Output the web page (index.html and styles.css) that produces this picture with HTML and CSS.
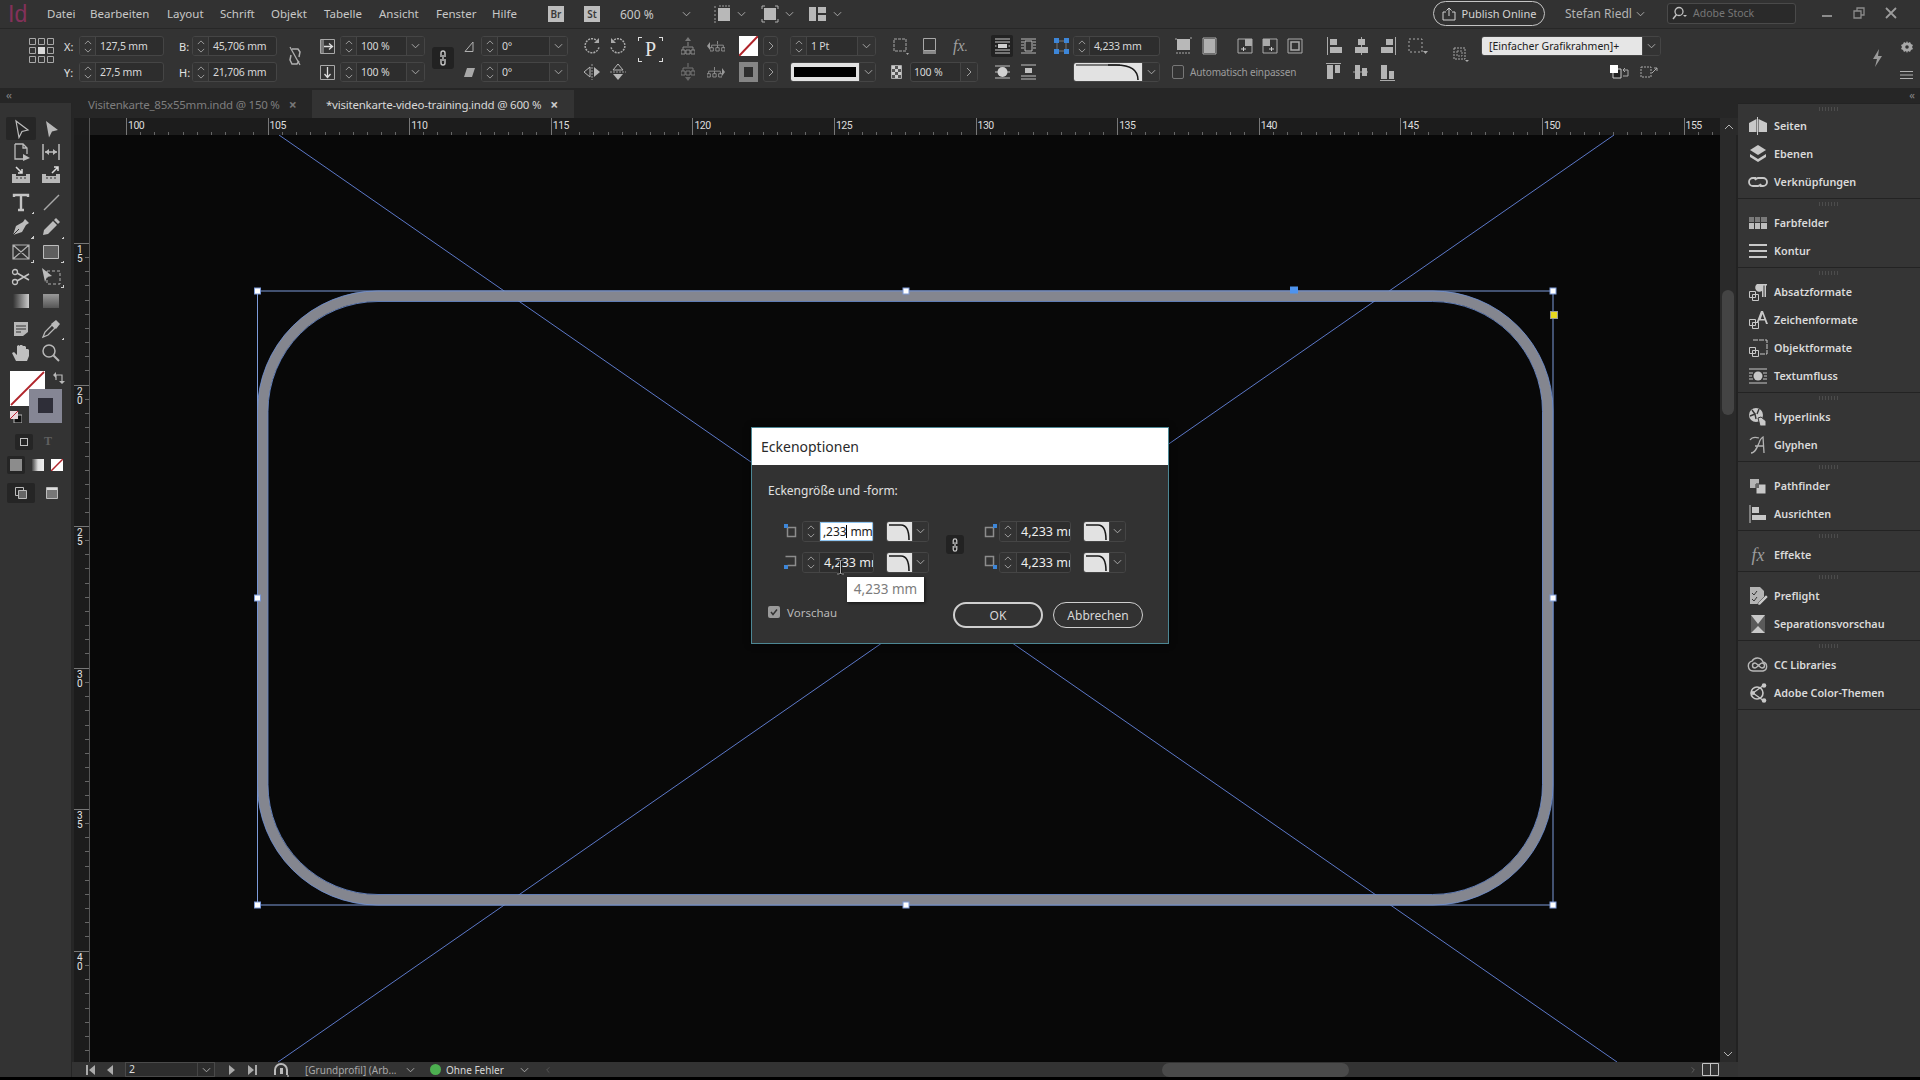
FILE: index.html
```html
<!DOCTYPE html>
<html lang="de">
<head>
<meta charset="utf-8">
<title>InDesign</title>
<link rel="stylesheet" href="styles.css">
</head>
<body>
<svg class="sprite" width="0" height="0">
  <symbol id="up" viewBox="0 0 10 6"><path d="M1 5l4-4 4 4" fill="none" stroke="#b4b4b4" stroke-width="1"/></symbol>
  <symbol id="dn" viewBox="0 0 10 6"><path d="M1 1l4 4 4-4" fill="none" stroke="#b4b4b4" stroke-width="1"/></symbol>
  <symbol id="rt" viewBox="0 0 6 10"><path d="M1 1l4 4-4 4" fill="none" stroke="#a0a0a0" stroke-width="1"/></symbol>
  <symbol id="corner" viewBox="0 0 26 20"><path d="M2 3H14Q22 3 22 18" fill="none" stroke="#1a1a1a" stroke-width="1.6"/></symbol>
  <symbol id="tri" viewBox="0 0 4 4"><path d="M4 0V4H0Z" fill="#c0c0c0"/></symbol>
  <symbol id="chain" viewBox="0 0 10 18"><path d="M3 8V4a2 2 0 0 1 4 0v4M3 10v4a2 2 0 0 0 4 0v-4M5 6v6" fill="none" stroke="#c8c8c8" stroke-width="1.4"/></symbol>
  <symbol id="hgrid" viewBox="0 0 18 12"><path d="M9 0v4M2 8V5h14v3M9 5v3" fill="none" stroke="#9a9a9a"/><path d="M0 8h4v4H0zM7 8h4v4H7zM14 8h4v4h-4z" fill="none" stroke="#9a9a9a"/></symbol>
</svg>

<div class="app">
  <header class="menubar">
    <span class="logo">Id</span>
    <nav class="menu">
      <span>Datei</span><span>Bearbeiten</span><span>Layout</span><span>Schrift</span><span>Objekt</span><span>Tabelle</span><span>Ansicht</span><span>Fenster</span><span>Hilfe</span>
    </nav>
    <span class="badge br">Br</span>
    <span class="badge st">St</span>
    <span class="zoomval">600 %</span>
    <svg class="ch zoomch"><use href="#dn"/></svg>
    <svg class="mi view1" width="18" height="18" viewBox="0 0 18 18"><path d="M5 3h12v13H5z" fill="#b8b8b8"/><path d="M1 2h3M1 6h3M1 10h3M1 14h3M1 17h3M6 1h11" stroke="#a0a0a0" stroke-dasharray="2 1" fill="none"/></svg>
    <svg class="ch vch"><use href="#dn"/></svg>
    <svg class="mi view2" width="18" height="18" viewBox="0 0 18 18"><path d="M3 3h12v12H3z" fill="#b8b8b8"/><path d="M1 4V1h3M14 1h3v3M17 14v3h-3M4 17H1v-3" stroke="#b0b0b0" fill="none"/></svg>
    <svg class="ch vch"><use href="#dn"/></svg>
    <svg class="mi view3" width="18" height="16" viewBox="0 0 18 16"><path d="M0 1h7v14H0zM9 1h8v6H9zM9 9h8v6H9z" fill="#b8b8b8"/></svg>
    <svg class="ch vch"><use href="#dn"/></svg>
    <button class="publish"><svg width="14" height="14" viewBox="0 0 14 14"><path d="M4 5H1v8h12V5h-3M7 9V1M4.500 3.500L7 1l2.500 2.500" fill="none" stroke="#d0d0d0"/></svg>Publish Online</button>
    <span class="user">Stefan Riedl</span>
    <svg class="ch userch"><use href="#dn"/></svg>
    <div class="search"><svg width="16" height="14" viewBox="0 0 16 14"><circle cx="7" cy="5.500" r="4" fill="none" stroke="#c0c0c0" stroke-width="1.300"/><path d="M4.500 8.500L1 13" stroke="#c0c0c0" stroke-width="1.500"/><path d="M11 9h4l-2 2z" fill="#c0c0c0"/></svg><span>Adobe Stock</span></div>
    <div class="winbtns">
      <svg width="12" height="12" viewBox="0 0 12 12"><path d="M1 8h10v2H1z" fill="#8c8c8c"/></svg>
      <svg width="12" height="12" viewBox="0 0 12 12"><path d="M1 4h7v7H1zM4 4V1h7v7H8" fill="none" stroke="#8c8c8c" stroke-width="1.300"/></svg>
      <svg width="12" height="12" viewBox="0 0 12 12"><path d="M1 1l10 10M11 1L1 11" stroke="#9c9c9c" stroke-width="1.800"/></svg>
    </div>
  </header>

  <section class="control">
    <svg class="refgrid" width="25" height="25" viewBox="0 0 25 25"><g fill="none" stroke="#a8a8a8"><path d="M.5 .5h6v6h-6zM9.500 .5h6v6h-6zM18.500 .5h6v6h-6zM.5 9.500h6v6h-6zM18.500 9.500h6v6h-6zM.5 18.500h6v6h-6zM9.500 18.500h6v6h-6zM18.500 18.500h6v6h-6z"/></g><path d="M9 9h7v7H9z" fill="#d8d8d8"/></svg>

    <div class="cg g-xy">
      <div class="r"><label>X:</label><div class="fld f85"><span class="spin"><svg><use href="#up"/></svg><svg><use href="#dn"/></svg></span><span class="val">127,5 mm</span></div></div>
      <div class="r"><label>Y:</label><div class="fld f85"><span class="spin"><svg><use href="#up"/></svg><svg><use href="#dn"/></svg></span><span class="val">27,5 mm</span></div></div>
    </div>
    <div class="cg g-bh">
      <div class="r"><label>B:</label><div class="fld f85"><span class="spin"><svg><use href="#up"/></svg><svg><use href="#dn"/></svg></span><span class="val">45,706 mm</span></div></div>
      <div class="r"><label>H:</label><div class="fld f85"><span class="spin"><svg><use href="#up"/></svg><svg><use href="#dn"/></svg></span><span class="val">21,706 mm</span></div></div>
    </div>
    <svg class="brokenlink" width="14" height="20" viewBox="0 0 14 20"><path d="M4 3l6 0 2 3-1 5M3 9l-1 5 2 4 5 0 2-3" fill="none" stroke="#b0b0b0" stroke-width="1.500"/><path d="M2 1l10 18" stroke="#b0b0b0" stroke-width="1.300"/></svg>
    <div class="cg g-scale">
      <div class="r"><svg class="ci15" viewBox="0 0 15 15"><path d="M.5 .5h14v14H.5z" fill="none" stroke="#a8a8a8"/><path d="M2 7.500h10M9 4.500l3.500 3-3.500 3" fill="none" stroke="#dedede" stroke-width="1.300"/><path d="M1 1h3v13H1z" fill="#777"/></svg><div class="fld f85"><span class="spin"><svg><use href="#up"/></svg><svg><use href="#dn"/></svg></span><span class="val">100 %</span><span class="dd"><svg><use href="#dn"/></svg></span></div></div>
      <div class="r"><svg class="ci15" viewBox="0 0 15 15"><path d="M.5 .5h14v14H.5z" fill="none" stroke="#a8a8a8"/><path d="M7.500 2v10M4.500 9l3 3.500 3-3.500" fill="none" stroke="#dedede" stroke-width="1.300"/></svg><div class="fld f85"><span class="spin"><svg><use href="#up"/></svg><svg><use href="#dn"/></svg></span><span class="val">100 %</span><span class="dd"><svg><use href="#dn"/></svg></span></div></div>
    </div>
    <div class="chainbtn"><svg width="10" height="18"><use href="#chain"/></svg></div>
    <div class="cg g-angle">
      <div class="r"><svg class="ci11" viewBox="0 0 11 11"><path d="M1 10.500L9 1v9.500z" fill="none" stroke="#b0b0b0"/></svg><div class="fld f87"><span class="spin"><svg><use href="#up"/></svg><svg><use href="#dn"/></svg></span><span class="val">0°</span><span class="dd"><svg><use href="#dn"/></svg></span></div></div>
      <div class="r"><svg class="ci11" viewBox="0 0 11 11"><path d="M0 10L3 1h8L8 10z" fill="#a8a8a8"/></svg><div class="fld f87"><span class="spin"><svg><use href="#up"/></svg><svg><use href="#dn"/></svg></span><span class="val">0°</span><span class="dd"><svg><use href="#dn"/></svg></span></div></div>
    </div>
    <div class="cg g-rot">
      <div class="r ic-gap"><svg width="18" height="18" viewBox="0 0 18 18"><path d="M15 5A7 7 0 1 0 16 10" fill="none" stroke="#aaa" stroke-width="1.500" stroke-dasharray="2 1"/><path d="M11 6h5V1z" fill="#aaa"/></svg><svg width="18" height="18" viewBox="0 0 18 18"><path d="M3 5A7 7 0 1 1 2 10" fill="none" stroke="#aaa" stroke-width="1.500" stroke-dasharray="2 1"/><path d="M7 6H2V1z" fill="#aaa"/></svg></div>
      <div class="r ic-gap"><svg width="18" height="18" viewBox="0 0 18 18"><path d="M7 4L1 9l6 5z" fill="none" stroke="#b8b8b8"/><path d="M11 4l6 5-6 5z" fill="#b8b8b8"/><path d="M9 1v16" stroke="#999" stroke-dasharray="2 1"/></svg><svg width="18" height="18" viewBox="0 0 18 18"><path d="M4 7L9 1l5 6z" fill="none" stroke="#b8b8b8"/><path d="M4 11l5 6 5-6z" fill="#b8b8b8"/><path d="M1 9h16" stroke="#999" stroke-dasharray="2 1"/></svg></div>
    </div>
    <div class="pbox"><span class="pglyph">P</span></div>
    <div class="cg g-tree">
      <div class="r ic-gap2"><svg width="14" height="18" viewBox="0 0 14 18"><path d="M7 0l3 4H4z" fill="#777"/><path d="M7 5v4M2 13v-3h10v3" fill="none" stroke="#8a8a8a"/><path d="M0 13h4v4H0zM5 13h4v4H5zM10 13h4v4h-4z" fill="none" stroke="#8a8a8a"/></svg><svg width="18" height="12" viewBox="0 0 18 12" class="lr"><path d="M0 6l3-4v8z" fill="#9a9a9a"/><use href="#hgrid" x="3" width="15"/></svg></div>
      <div class="r ic-gap2"><svg width="14" height="18" viewBox="0 0 14 18"><path d="M7 0v4M2 8V5h10v3" fill="none" stroke="#777"/><path d="M0 8h4v4H0zM5 8h4v4H5zM10 8h4v4h-4z" fill="none" stroke="#777"/><path d="M7 18l3-4H4z" fill="#666"/></svg><svg width="18" height="12" viewBox="0 0 18 12" class="lr"><path d="M18 6l-3-4v8z" fill="#9a9a9a"/><use href="#hgrid" width="15"/></svg></div>
    </div>
    <div class="cg g-sw">
      <div class="r"><svg class="swatch" width="19" height="20" viewBox="0 0 19 20"><path d="M0 0h19v20H0z" fill="#fff"/><path d="M0 20L19 0" stroke="#b0242a" stroke-width="2"/></svg><span class="arrowbtn"><svg><use href="#rt"/></svg></span></div>
      <div class="r"><svg class="swatch" width="19" height="20" viewBox="0 0 19 20"><path d="M0 0h19v20H0z" fill="#858585"/><path d="M5 5h9v10H5z" fill="#2e2e2e"/></svg><span class="arrowbtn"><svg><use href="#rt"/></svg></span></div>
    </div>
    <div class="cg g-stroke">
      <div class="fld f86"><span class="spin"><svg><use href="#up"/></svg><svg><use href="#dn"/></svg></span><span class="val">1 Pt</span><span class="dd"><svg><use href="#dn"/></svg></span></div>
      <div class="fld f86"><span class="whitebox"><i class="blackline"></i></span><span class="dd"><svg><use href="#dn"/></svg></span></div>
    </div>
    <div class="cg g-fx">
      <div class="r fxrow">
        <svg width="16" height="18" viewBox="0 0 16 18"><path d="M1 2h12v12H1z" fill="none" stroke="#a8a8a8" stroke-dasharray="3 1"/><path d="M13 16h3l-1.500 2z" fill="#aaa"/></svg>
        <svg width="15" height="18" viewBox="0 0 15 18"><path d="M1.500 1.500h12v12h-12z" fill="none" stroke="#a8a8a8"/><path d="M1 14h13v3H1z" fill="#888"/></svg>
        <span class="fxtxt">fx<small>.</small></span>
      </div>
      <div class="r oprow">
        <svg width="11" height="14" viewBox="0 0 11 14"><path d="M.5 .5h10v13H.5z" fill="#555" stroke="#aaa"/><path d="M1 1h3v3H1zM7 1h3v3H7zM4 4h3v3H4zM1 7h3v3H1zM7 7h3v3H7zM4 10h3v3H4z" fill="#ccc"/></svg>
        <div class="fld f68"><span class="val">100 %</span><span class="dd"><svg><use href="#rt"/></svg></span></div>
      </div>
    </div>
    <div class="cg g-wrap">
      <div class="r"><span class="wrapon"><svg width="15" height="16" viewBox="0 0 15 16"><path d="M0 1h15M0 4h15M0 12h15M0 15h15" stroke="#c8c8c8"/><path d="M3 6h9v4H3z" fill="#d0d0d0"/><path d="M0 8h1.500M13.500 8H15" stroke="#c8c8c8"/></svg></span><svg width="15" height="16" viewBox="0 0 15 16"><path d="M0 1h15M0 15h15" stroke="#b8b8b8"/><path d="M4 3h7v10H4z" fill="none" stroke="#b8b8b8"/><path d="M0 4h3M0 7h3M0 10h3M12 4h3M12 7h3M12 10h3" stroke="#b8b8b8"/></svg></div>
      <div class="r"><span class="wrapoff"><svg width="15" height="16" viewBox="0 0 15 16"><path d="M0 2h15M0 14h15M0 8h15" stroke="#c0c0c0"/><ellipse cx="7.500" cy="8" rx="5" ry="5" fill="#d0d0d0"/></svg></span><svg width="15" height="16" viewBox="0 0 15 16"><path d="M0 1h15M0 12h15M0 15h15" stroke="#c0c0c0"/><path d="M4 4h7v5H4z" fill="#c0c0c0"/></svg></div>
    </div>
    <div class="cg g-corner">
      <div class="r"><svg class="cornerblue" width="15" height="16" viewBox="0 0 15 16"><path d="M3 3h9v10H3z" fill="none" stroke="#777"/><path d="M0 0h5v5H0zM10 0h5v5h-5zM0 11h5v5H0zM10 11h5v5h-5z" fill="#3d86d8"/></svg><div class="fld f87"><span class="spin"><svg><use href="#up"/></svg><svg><use href="#dn"/></svg></span><span class="val">4,233 mm</span></div></div>
      <div class="fld f87 cornerstyle"><span class="whitebox wb2"><svg width="66" height="20" viewBox="0 0 66 20"><path d="M2 3H46" stroke="#777" stroke-width="2"/><path d="M34 3h8Q64 3 64 18" fill="none" stroke="#1a1a1a" stroke-width="1.600"/></svg></span><span class="dd"><svg><use href="#dn"/></svg></span></div>
    </div>
    <div class="cg g-fit">
      <div class="r fitrow">
        <svg width="17" height="18" viewBox="0 0 17 18"><path d="M2 2h13v11H2z" fill="#b8b8b8"/><path d="M1 1v2M15 1h2M1 16h15" stroke="#aaa" stroke-dasharray="2 1" fill="none"/></svg>
        <svg width="17" height="18" viewBox="0 0 17 18"><path d="M2 1h13v16H2z" fill="none" stroke="#aaa"/><path d="M3 2h11v14H3z" fill="#b0b0b0"/></svg>
        <svg class="m10" width="16" height="18" viewBox="0 0 16 18"><path d="M1 2h14v14H1z" fill="none" stroke="#aaa"/><path d="M8 2h7v7H8z" fill="#aaa"/><path d="M4 12h5M6.500 10v4" stroke="#ccc"/></svg>
        <svg width="16" height="18" viewBox="0 0 16 18"><path d="M1 2h14v14H1z" fill="none" stroke="#aaa"/><path d="M1 2h7v7H1z" fill="#aaa"/><path d="M7 12h5M9.500 10v4" stroke="#ccc"/></svg>
        <svg width="16" height="18" viewBox="0 0 16 18"><path d="M1 2h14v14H1z" fill="none" stroke="#aaa"/><path d="M4 5h8v8H4z" fill="none" stroke="#aaa" stroke-width="1.500"/></svg>
      </div>
      <div class="r autofit"><i class="cb"></i><span>Automatisch einpassen</span></div>
    </div>
    <div class="cg g-align">
      <div class="r alrow">
        <svg width="15" height="18" viewBox="0 0 15 18"><path d="M.5 0v18" stroke="#aaa"/><path d="M3 2h7v6H3zM3 10h12v6H3z" fill="#b4b4b4"/></svg>
        <svg width="15" height="18" viewBox="0 0 15 18"><path d="M7.500 0v18" stroke="#aaa"/><path d="M4 2h7v6H4zM1 10h13v6H1z" fill="#b4b4b4"/></svg>
        <svg width="15" height="18" viewBox="0 0 15 18"><path d="M14.500 0v18" stroke="#aaa"/><path d="M5 2h7v6H5zM0 10h12v6H0z" fill="#b4b4b4"/></svg>
        <svg width="20" height="18" viewBox="0 0 20 18"><path d="M1 2h13v13H1z" fill="none" stroke="#aaa" stroke-dasharray="2 2"/><path d="M15 14h5l-2.500 3z" fill="#aaa"/></svg>
      </div>
      <div class="r alrow alrow2">
        <svg width="15" height="18" viewBox="0 0 15 18"><path d="M0 .5h15" stroke="#aaa"/><path d="M1 2h6v14H1zM9 2h5v8H9z" fill="#b4b4b4"/></svg>
        <svg width="15" height="18" viewBox="0 0 15 18"><path d="M0 9h15" stroke="#aaa"/><path d="M2 2h5v14H2zM9 5h5v8H9z" fill="#b4b4b4"/></svg>
        <svg width="15" height="18" viewBox="0 0 15 18"><path d="M0 17.500h15" stroke="#aaa"/><path d="M1 2h6v14H1zM9 8h5v8H9z" fill="#b4b4b4"/></svg>
      </div>
    </div>
    <svg class="framedot" width="16" height="18" viewBox="0 0 16 18"><path d="M1 2h11v11H1z" fill="none" stroke="#aaa" stroke-dasharray="2 1"/><path d="M4 5h5v5H4z" fill="none" stroke="#999" stroke-dasharray="2 1"/><path d="M12 14h4l-2 2z" fill="#aaa"/></svg>
    <div class="cg g-style">
      <div class="fld f180"><span class="stylebox">[Einfacher Grafikrahmen]+</span><span class="dd"><svg><use href="#dn"/></svg></span></div>
      <div class="r stylerow">
        <svg width="20" height="16" viewBox="0 0 20 16"><path d="M3 5h8v9H3z" fill="#222" stroke="#ccc"/><path d="M0 1h8v8H0z" fill="#fff"/><path d="M13 6h5v6h-5M15 4l-2 2 2 2" fill="none" stroke="#aaa"/></svg>
        <svg width="18" height="16" viewBox="0 0 18 16"><path d="M1 3h10v10H1z" fill="none" stroke="#aaa" stroke-dasharray="2 1"/><path d="M12 9l5-5M14 4h3v3" stroke="#aaa" fill="none"/></svg>
      </div>
    </div>
    <svg class="bolt" width="11" height="18" viewBox="0 0 11 18"><path d="M7 0L1 10h4l-2 8 7-11H6z" fill="#9a9a9a"/></svg>
    <div class="cg g-last">
      <svg width="12" height="12" viewBox="0 0 12 12"><path d="M6 0l1 2 2-1 1 2 2 1-1 2 1 2-2 1-1 2-2-1-1 2-1-2-2 1-1-2-2-1 1-2-1-2 2-1 1-2 2 1z" fill="#a8a8a8"/><circle cx="6" cy="6" r="1.800" fill="#333"/></svg>
      <svg width="13" height="8" viewBox="0 0 13 8"><path d="M0 .5h13M0 4h13M0 7.500h13" stroke="#b0b0b0"/></svg>
    </div>
  </section>

  <main class="main">
    <aside class="left">
      <div class="strip"><span class="collapse">‹‹</span></div>
      <div class="toolbar">
        <div class="grip"></div>
        <div class="tools t-a">
          <span class="tool on"><svg width="20" height="20" viewBox="0 0 20 20"><path d="M5 2l12 9-6 1.500-3 6z" fill="none" stroke="#bcbcbc" stroke-width="1.200"/></svg></span>
          <span class="tool"><svg width="20" height="20" viewBox="0 0 20 20"><path d="M5 2l12 9-6 1.500-3 6z" fill="#b8b8b8"/></svg></span>
          <span class="tool"><svg width="20" height="20" viewBox="0 0 20 20"><path d="M4 2h8l4 4v6M4 2v15h8M12 2v4h4" fill="none" stroke="#bcbcbc" stroke-width="1.300"/><path d="M12 12l7 4-7 3z" fill="#bcbcbc"/></svg></span>
          <span class="tool"><svg width="20" height="20" viewBox="0 0 20 20"><path d="M2 2v16M18 2v16M4 10h12" stroke="#bcbcbc" stroke-width="1.500"/><path d="M4 10l4-3v6zM16 10l-4-3v6z" fill="#bcbcbc"/></svg></span>
          <span class="tool"><svg width="20" height="20" viewBox="0 0 20 20"><path d="M1 9h4v2h10V9h4v9H1z" fill="#b8b8b8"/><path d="M5 13h2M9 13h2M13 13h2" stroke="#333"/><path d="M5 2l6 6M11 4v4H7" stroke="#ddd" stroke-width="1.500" fill="none"/></svg></span>
          <span class="tool"><svg width="20" height="20" viewBox="0 0 20 20"><path d="M1 9h4v2h10V9h4v9H1z" fill="#b8b8b8"/><path d="M5 13h2M9 13h2M13 13h2" stroke="#333"/><path d="M17 2l-6 6M13 2h4v4" stroke="#ddd" stroke-width="1.500" fill="none"/></svg></span>
        </div>
        <div class="tools t-b">
          <span class="tool"><svg width="20" height="20" viewBox="0 0 20 20"><path d="M3 5V3h14v2M10 3v15M7 18h6" fill="none" stroke="#c4c4c4" stroke-width="2.400"/></svg><i class="c"></i></span>
          <span class="tool"><svg width="20" height="20" viewBox="0 0 20 20"><path d="M3 18L18 3" stroke="#a8a8a8" stroke-width="1.500"/></svg></span>
          <span class="tool"><svg width="20" height="20" viewBox="0 0 20 20"><path d="M2 18l3-9 7-4 3 3-4 7zM12 5l2-3 4 4-3 2" fill="#bcbcbc"/><path d="M2 18l6-6" stroke="#333"/></svg><i class="c"></i></span>
          <span class="tool"><svg width="20" height="20" viewBox="0 0 20 20"><path d="M2 18l1-5 9-9 4 4-9 9zM13 3l2-2 4 4-2 2z" fill="#bcbcbc"/></svg><i class="c"></i></span>
          <span class="tool"><svg width="20" height="20" viewBox="0 0 20 20"><path d="M2 3h16v14H2zM2 3l16 14M18 3L2 17" fill="none" stroke="#b4b4b4" stroke-width="1.200"/></svg><i class="c"></i></span>
          <span class="tool"><svg width="20" height="20" viewBox="0 0 20 20"><path d="M2.500 3.500h15v13h-15z" fill="#5e5e5e" stroke="#bcbcbc"/></svg><i class="c"></i></span>
          <span class="tool"><svg width="20" height="20" viewBox="0 0 20 20"><circle cx="4" cy="5" r="2.500" fill="none" stroke="#c4c4c4" stroke-width="1.300"/><circle cx="4" cy="15" r="2.500" fill="none" stroke="#c4c4c4" stroke-width="1.300"/><path d="M6 6l12 7M6 14l12-7" stroke="#c4c4c4" stroke-width="1.500"/></svg></span>
          <span class="tool"><svg width="20" height="20" viewBox="0 0 20 20"><path d="M6 4h13v13H6z" fill="none" stroke="#b0b0b0" stroke-dasharray="3 2"/><path d="M1 1l10 8-5 1-2 5z" fill="#bcbcbc"/></svg><i class="c"></i></span>
          <span class="tool"><span class="grad g1"></span></span>
          <span class="tool"><span class="grad g2"></span></span>
        </div>
        <div class="tools t-c">
          <span class="tool"><svg width="20" height="20" viewBox="0 0 20 20"><path d="M3 3h14v10l-5 4H3z" fill="#b8b8b8"/><path d="M5 7h10M5 10h10M5 13h5" stroke="#333"/></svg></span>
          <span class="tool"><svg width="20" height="20" viewBox="0 0 20 20"><path d="M2 18l2-5 7-7 3 3-7 7z" fill="none" stroke="#b8b8b8" stroke-width="1.300"/><path d="M10 5l5-4 4 4-4 5z" fill="#b8b8b8"/></svg><i class="c"></i></span>
          <span class="tool"><svg width="20" height="20" viewBox="0 0 20 20"><path d="M5 18L1 10l2-1 3 3V3l1.500-1L9 3v5l0-6 2 0 1 1 0 5V3h2l1 1v5l0-3h2l1 1v6l-2 5z" fill="#c0c0c0"/></svg></span>
          <span class="tool"><svg width="20" height="20" viewBox="0 0 20 20"><circle cx="8" cy="8" r="6" fill="none" stroke="#b8b8b8" stroke-width="1.500"/><path d="M12.500 12.500L18 18" stroke="#b8b8b8" stroke-width="2"/></svg></span>
        </div>
        <div class="colorbox">
          <svg class="fillsw" width="35" height="35" viewBox="0 0 35 35"><path d="M0 0h35v35H0z" fill="#fff"/><path d="M1 34L34 1" stroke="#b0242a" stroke-width="1.800"/></svg>
          <span class="strokesw"><i></i></span>
          <svg class="swap" width="12" height="12" viewBox="0 0 12 12"><path d="M3 8V3h6v6" fill="none" stroke="#b8b8b8" stroke-width="1.200"/><path d="M0 3l3-3 0 6zM6 9h6l-3 3z" fill="#b8b8b8"/></svg>
          <svg class="dflt" width="12" height="12" viewBox="0 0 12 12"><path d="M4 4h8v8H4z" fill="#111" stroke="#bbb"/><path d="M0 0h8v8H0z" fill="#e8d8dc"/><path d="M0 8l8-8" stroke="#c02030"/></svg>
        </div>
        <div class="moderow">
          <span class="modeon"><i></i></span>
          <span class="tee">T</span>
        </div>
        <div class="applyrow">
          <span class="applyon"><i></i></span>
          <span class="ag"></span>
          <svg width="12" height="12" viewBox="0 0 12 12"><path d="M0 0h12v12H0z" fill="#fff"/><path d="M0 12L12 0" stroke="#b0242a" stroke-width="1.500"/></svg>
        </div>
        <div class="viewrow">
          <span class="viewon"><svg width="12" height="12" viewBox="0 0 12 12"><path d="M.5 .5h8v8h-8z" fill="none" stroke="#bbb"/><path d="M3.500 3.500h8v8h-8z" fill="#666" stroke="#bbb"/></svg></span>
          <svg width="12" height="12" viewBox="0 0 12 12"><path d="M.5 .5h11v11H.5z" fill="#777" stroke="#bbb"/><path d="M1 1h10v2H1z" fill="#ddd"/></svg>
        </div>
      </div>
    </aside>

    <div class="center">
      <div class="tabs">
        <div class="tab">Visitenkarte_85x55mm.indd @ 150 %<b>×</b></div>
        <div class="tab active">*visitenkarte-video-training.indd @ 600 %<b>×</b></div>
      </div>
      <div class="hrow">
        <div class="corner"><i></i></div>
        <div class="hruler">
          <span>100</span><span>105</span><span>110</span><span>115</span><span>120</span><span>125</span><span>130</span><span>135</span><span>140</span><span>145</span><span>150</span><span>155</span>
        </div>
        <div class="vs-top"><svg width="10" height="6"><use href="#up"/></svg></div>
      </div>
      <div class="work">
        <div class="vruler">
          <span>1<br>5</span><span>2<br>0</span><span>2<br>5</span><span>3<br>0</span><span>3<br>5</span><span>4<br>0</span>
        </div>
        <div class="canvas">
          <svg class="art" width="1630" height="927" viewBox="90 135 1630 927">
            <g stroke="#5c78c8" stroke-width="1" fill="none">
              <path d="M279 135L1617 1062"/>
              <path d="M1614 135L278 1062"/>
            </g>
            <rect x="257.500" y="291" width="1295.500" height="614" fill="none" stroke="#7c9ad8" stroke-width="1"/>
            <rect x="262.700" y="296" width="1285" height="604" rx="115" ry="115" fill="none" stroke="#84868f" stroke-width="10.500"/>
            <rect x="257.500" y="291" width="1295.500" height="614" rx="120" ry="120" fill="none" stroke="#6f92d8" stroke-width=".8"/>
            <rect x="268" y="301.500" width="1274.500" height="593" rx="110" ry="110" fill="none" stroke="#6f92d8" stroke-width=".8"/>
            <g fill="#fff" stroke="#7c9ad8" stroke-width="1">
              <rect x="254.500" y="288" width="6" height="6"/>
              <rect x="903" y="288" width="6" height="6"/>
              <rect x="1550" y="288" width="6" height="6"/>
              <rect x="254.500" y="595" width="6" height="6"/>
              <rect x="1550" y="595" width="6" height="6"/>
              <rect x="254.500" y="902" width="6" height="6"/>
              <rect x="903" y="902" width="6" height="6"/>
              <rect x="1550" y="902" width="6" height="6"/>
            </g>
            <rect x="1290" y="286.500" width="8" height="7" fill="#4d93ee"/>
            <rect x="1550.500" y="311.500" width="7" height="7" fill="#e8d820" stroke="#999"/>
          </svg>
        </div>
        <div class="vscroll"><i class="thumb"></i><svg class="vsdn" width="10" height="6"><use href="#dn"/></svg></div>
      </div>
      <div class="status">
        <svg class="s-first" width="9" height="10" viewBox="0 0 9 10"><path d="M0 0h2v10H0zM9 0v10L3 5z" fill="#aaa"/></svg>
        <svg class="s-prev" width="6" height="10" viewBox="0 0 6 10"><path d="M6 0v10L0 5z" fill="#aaa"/></svg>
        <div class="pagefld"><span>2</span><span class="dd"><svg><use href="#dn"/></svg></span></div>
        <svg class="s-next" width="6" height="10" viewBox="0 0 6 10"><path d="M0 0v10l6-5z" fill="#aaa"/></svg>
        <svg class="s-last" width="9" height="10" viewBox="0 0 9 10"><path d="M7 0h2v10H7zM0 0v10l6-5z" fill="#aaa"/></svg>
        <svg class="s-globe" width="15" height="14" viewBox="0 0 15 14"><path d="M1 12V7a6 6 0 0 1 12 0v5" fill="none" stroke="#bbb" stroke-width="2"/><path d="M6 5h3v6H6z" fill="#bbb"/><path d="M13 12h2v2h-2z" fill="#888"/></svg>
        <span class="profile">[Grundprofil] (Arb...</span>
        <svg class="ch s-ch1"><use href="#dn"/></svg>
        <i class="dot"></i>
        <span class="noerr">Ohne Fehler</span>
        <svg class="ch s-ch2"><use href="#dn"/></svg>
        <svg class="s-la" width="4" height="10" viewBox="0 0 6 10"><path d="M5 1L1 5l4 4" fill="none" stroke="#666"/></svg>
        <i class="hthumb"></i>
        <svg class="s-ra" width="4" height="10" viewBox="0 0 6 10"><path d="M1 1l4 4-4 4" fill="none" stroke="#777"/></svg>
        <svg class="s-split" width="17" height="13" viewBox="0 0 17 13"><path d="M.5 .5h16v12H.5zM8.500 .5v12" fill="none" stroke="#c4c4c4"/></svg>
        <i class="s-grip"></i>
      </div>
    </div>

    <aside class="panel">
      <div class="strip pstrip"><span class="collapse">‹‹</span></div>
      <div class="pgroup first">
        <div class="pgrip"></div>
        <div class="pi"><svg viewBox="0 0 20 20"><path d="M9.500 1v18" stroke="#c8c8c8"/><path d="M8.500 3L1 7v9h7.500zM10.500 3L19 7v9h-8.500z" fill="#c8c8c8"/></svg><span>Seiten</span></div>
        <div class="pi"><svg viewBox="0 0 20 20"><path d="M10 1l8 5-8 5-8-5z" fill="#c8c8c8"/><path d="M2 10l8 5 8-5v3l-8 5-8-5z" fill="#c8c8c8"/></svg><span>Ebenen</span></div>
        <div class="pi"><svg viewBox="0 0 20 20"><path d="M8 6H5a4 4 0 0 0 0 8h5a4 4 0 0 0 3-2M12 14h3a4 4 0 0 0 0-8h-5a4 4 0 0 0-3 2" fill="none" stroke="#c8c8c8" stroke-width="1.800"/></svg><span>Verknüpfungen</span></div>
      </div>
      <div class="pgroup">
        <div class="pgrip"></div>
        <div class="pi"><svg viewBox="0 0 20 20"><path d="M1 4h5v5H1zM7 4h5v5H7zM13 4h6v5h-6z" fill="#7a7a7a"/><path d="M1 10h5v6H1zM7 10h5v6H7zM13 10h6v6h-6z" fill="#bdbdbd"/></svg><span>Farbfelder</span></div>
        <div class="pi"><svg viewBox="0 0 20 20"><path d="M1 4h18M1 10h18M1 16h18" stroke="#c8c8c8" stroke-width="2"/></svg><span>Kontur</span></div>
      </div>
      <div class="pgroup">
        <div class="pgrip"></div>
        <div class="pi"><svg viewBox="0 0 20 20"><path d="M9 2h10v1.500h-1V15h-1.500V3.500h-1V15H14V9a3.500 3.500 0 0 1-5-7z" fill="#c8c8c8"/><path d="M1.500 9.500h6v6h-6zM4.500 12.500h6v6h-6z" fill="#353535" stroke="#c8c8c8"/></svg><span>Absatzformate</span></div>
        <div class="pi"><svg viewBox="0 0 20 20"><path d="M13 1h2l5 13h-2l-1.200-3.500h-5.600L10 14H8zM12.800 9h3.400L14.500 4z" fill="#c8c8c8"/><path d="M1.500 9.500h6v6h-6zM4.500 12.500h6v6h-6z" fill="#353535" stroke="#c8c8c8"/></svg><span>Zeichenformate</span></div>
        <div class="pi"><svg viewBox="0 0 20 20"><path d="M5 2h14v14H8" fill="none" stroke="#c8c8c8" stroke-dasharray="5 1"/><path d="M1.500 9.500h6v6h-6zM4.500 12.500h6v6h-6z" fill="#353535" stroke="#c8c8c8"/></svg><span>Objektformate</span></div>
        <div class="pi"><svg viewBox="0 0 20 20"><path d="M1 3h18M1 17h18M1 7h4M15 7h4M1 10h3M16 10h3M1 13h4M15 13h4" stroke="#c8c8c8"/><circle cx="10" cy="10" r="4.500" fill="#c8c8c8"/></svg><span>Textumfluss</span></div>
      </div>
      <div class="pgroup">
        <div class="pgrip"></div>
        <div class="pi"><svg viewBox="0 0 20 20"><circle cx="8" cy="8" r="7" fill="#c8c8c8"/><path d="M4 3l3 4M2 9l5-2 1 5M11 2l-2 5" stroke="#353535" stroke-width="1.400" fill="none"/><path d="M10 11l3-1 5 4v5h-6z" fill="#c8c8c8" stroke="#353535"/></svg><span>Hyperlinks</span></div>
        <div class="pi"><svg viewBox="0 0 20 20"><path d="M3 18c4 0 6-5 8-10 1-3 2-5 4-6l1 16M7 11h8M2 5c2-3 6-3 9-2" fill="none" stroke="#b4b4b4" stroke-width="1.300"/></svg><span>Glyphen</span></div>
      </div>
      <div class="pgroup">
        <div class="pgrip"></div>
        <div class="pi"><svg viewBox="0 0 20 20"><path d="M2 3h9v9H2z" fill="#b4b4b4"/><path d="M8 8h10v10H8z" fill="#c8c8c8" stroke="#353535"/><path d="M8 8h3v4H8z" fill="#666"/></svg><span>Pathfinder</span></div>
        <div class="pi"><svg viewBox="0 0 20 20"><path d="M2 1v18" stroke="#c8c8c8"/><path d="M4 3h7v6H4zM4 11h14v5H4z" fill="#c8c8c8"/></svg><span>Ausrichten</span></div>
      </div>
      <div class="pgroup">
        <div class="pgrip"></div>
        <div class="pi"><span class="fxbig">fx</span><span>Effekte</span></div>
      </div>
      <div class="pgroup">
        <div class="pgrip"></div>
        <div class="pi"><svg viewBox="0 0 20 20"><path d="M2 1h10l4 4v6l-6 7H2z" fill="#b4b4b4"/><path d="M4 7l2 2 3-4M4 13l2 2 3-4" stroke="#353535" fill="none"/><path d="M10 17l8-8 2 2-8 8h-2z" fill="#c8c8c8" stroke="#353535" stroke-width=".5"/></svg><span>Preflight</span></div>
        <div class="pi"><svg viewBox="0 0 20 20"><path d="M3 1h14v18H3z" fill="#5a5a5a"/><path d="M3 1h14L10 10zM3 19l7-7 7 7z" fill="#c8c8c8"/></svg><span>Separationsvorschau</span></div>
      </div>
      <div class="pgroup">
        <div class="pgrip"></div>
        <div class="pi"><svg class="ccl" viewBox="0 0 22 16"><path d="M6 14a5 5 0 0 1-1-9.800A6 6 0 0 1 16 5a4.600 4.600 0 0 1 0 9z" fill="none" stroke="#b8b8b8" stroke-width="1.400"/><path d="M8 11a2.500 2.500 0 0 1 0-5c2 0 5 5 7 5a2.500 2.500 0 0 0 0-5c-2 0-5 5-7 5z" fill="none" stroke="#b8b8b8" stroke-width="1.400"/></svg><span>CC Libraries</span></div>
        <div class="pi"><svg viewBox="0 0 20 20"><circle cx="9" cy="10" r="6" fill="none" stroke="#c8c8c8" stroke-width="1.600"/><path d="M5 10L16 2M5 10l11 8" stroke="#c8c8c8" stroke-width="1.300"/><circle cx="16" cy="2.500" r="2.300" fill="#c8c8c8"/><circle cx="16" cy="17.500" r="2.300" fill="#c8c8c8"/><circle cx="5" cy="10" r="2" fill="#c8c8c8"/></svg><span>Adobe Color-Themen</span></div>
      </div>
    </aside>
  </main>

  <div class="dialog">
    <div class="dtitle">Eckenoptionen</div>
    <div class="dbody">
      <div class="dhead">Eckengröße und -form:</div>
      <div class="corners">
        <div class="ccol">
          <div class="crow"><svg class="cmark" width="13" height="14" viewBox="0 0 13 14"><path d="M3.500 3.500h8v9h-8z" fill="none" stroke="#8c8c8c" stroke-width="1.500"/><path d="M0 0h4v4H0z" fill="#3d86d8"/></svg><div class="dfld"><span class="spin dspin"><svg><use href="#up"/></svg><svg><use href="#dn"/></svg></span><span class="dval focus">,233<i class="caret"></i> mm</span></div><div class="dswatch"><span class="ds"><svg width="26" height="20"><use href="#corner"/></svg></span><span class="dd"><svg><use href="#dn"/></svg></span></div></div>
          <div class="crow"><svg class="cmark" width="13" height="14" viewBox="0 0 13 14"><path d="M1.500 1.500h10v9h-8" fill="none" stroke="#8c8c8c" stroke-width="1.500"/><path d="M0 10h4v4H0z" fill="#3d86d8"/></svg><div class="dfld"><span class="spin dspin"><svg><use href="#up"/></svg><svg><use href="#dn"/></svg></span><span class="dval">4,233 mm</span></div><div class="dswatch"><span class="ds"><svg width="26" height="20"><use href="#corner"/></svg></span><span class="dd"><svg><use href="#dn"/></svg></span></div></div>
        </div>
        <div class="dchain"><svg width="10" height="16"><use href="#chain"/></svg></div>
        <div class="ccol cright">
          <div class="crow"><svg class="cmark" width="13" height="14" viewBox="0 0 13 14"><path d="M9.500 3.500h-8v9h8z" fill="none" stroke="#8c8c8c" stroke-width="1.500"/><path d="M9 0h4v4H9z" fill="#3d86d8"/></svg><div class="dfld"><span class="spin dspin"><svg><use href="#up"/></svg><svg><use href="#dn"/></svg></span><span class="dval">4,233 mm</span></div><div class="dswatch"><span class="ds"><svg width="26" height="20"><use href="#corner"/></svg></span><span class="dd"><svg><use href="#dn"/></svg></span></div></div>
          <div class="crow"><svg class="cmark" width="13" height="14" viewBox="0 0 13 14"><path d="M1.500 1.500h8v9h-8z" fill="none" stroke="#8c8c8c" stroke-width="1.500"/><path d="M9 10h4v4H9z" fill="#3d86d8"/></svg><div class="dfld"><span class="spin dspin"><svg><use href="#up"/></svg><svg><use href="#dn"/></svg></span><span class="dval">4,233 mm</span></div><div class="dswatch"><span class="ds"><svg width="26" height="20"><use href="#corner"/></svg></span><span class="dd"><svg><use href="#dn"/></svg></span></div></div>
        </div>
      </div>
      <div class="dfoot">
        <span class="preview"><i class="pcb"><svg width="12" height="12" viewBox="0 0 12 12"><path d="M3 6l2 2.500 4-5" fill="none" stroke="#333" stroke-width="1.500"/></svg></i>Vorschau</span>
        <span class="btn ok">OK</span>
        <span class="btn">Abbrechen</span>
      </div>
    </div>
    <div class="tooltip">4,233 mm</div>
    <svg class="ibeam" width="9" height="16" viewBox="0 0 9 16"><path d="M1 1h2.500l1 1 1-1H8M4.500 2v12M1 15h2.500l1-1 1 1H8" fill="none" stroke="#111" stroke-width="2.400"/><path d="M1 1h2.500l1 1 1-1H8M4.500 2v12M1 15h2.500l1-1 1 1H8" fill="none" stroke="#ddd" stroke-width=".8"/></svg>
  </div>
</div>
</body>
</html>
```
FILE: styles.css
```css
* { box-sizing: border-box; }
html, body { margin: 0; padding: 0; background: #000; overflow: hidden; }
body { width: 1920px; height: 1080px; font-family: "Noto Sans", "Open Sans", sans-serif; color: #c8c8c8; font-size: 11px; }
.sprite { position: absolute; }
i { display: block; font-style: normal; }
svg { display: block; flex: none; }

.app { position: relative; width: 1920px; height: 1077px; display: flex; flex-direction: column; overflow: hidden; background: #333; }

/* menu bar */
.menubar { height: 29px; flex: none; display: flex; align-items: center; background: #323232; border-bottom: 1px solid #272727; font-size: 11.500px; }
.logo { width: 47px; padding-left: 8px; font-size: 23px; font-weight: 400; color: #83315a; line-height: 1; font-family: "Liberation Sans", sans-serif; }
.menu { display: flex; width: 501px; margin-top: -2px; }
.menu span:nth-child(1) { width: 43px; }
.menu span:nth-child(2) { width: 77px; }
.menu span:nth-child(3) { width: 53px; }
.menu span:nth-child(4) { width: 51px; }
.menu span:nth-child(5) { width: 53px; }
.menu span:nth-child(6) { width: 55px; }
.menu span:nth-child(7) { width: 57px; }
.menu span:nth-child(8) { width: 56px; }
.badge { width: 16px; height: 16px; background: #bdbdbd; color: #3a3a3a; font-size: 10px; font-weight: 600; line-height: 16px; text-align: center; }
.st { margin-left: 20px; }
.zoomval { margin-left: 20px; width: 60px; font-size: 12px; }
.ch { width: 9px; height: 6px; }
.zoomch { margin-left: 2px; }
.mi.view1 { margin-left: 22px; }
.mi.view2 { margin-left: 15px; }
.mi.view3 { margin-left: 15px; }
.vch { margin-left: 6px; }
.publish { margin: -1px 0 0 591px; width: 112px; height: 25px; border: 1px solid #c4c4c4; border-radius: 13px; background: transparent; color: #d4d4d4; display: flex; align-items: center; justify-content: center; gap: 6px; font: 11px "Noto Sans", sans-serif; padding: 0; }
.user { margin: -2px 0 0 20px; width: 70px; font-size: 12px; color: #b4b4b4; }
.userch { margin-left: 1px; }
.search { margin: -2px 0 0 22px; width: 129px; height: 21px; border: 1px solid #4a4a4a; border-radius: 3px; background: #2a2a2a; display: flex; align-items: center; padding-left: 4px; gap: 5px; color: #777; font-size: 10.500px; }
.winbtns { margin: -3px 0 0 25px; width: 76px; display: flex; justify-content: space-between; }

/* control bar */
.control { height: 60px; flex: none; display: flex; padding: 7px 0 0 29px; background: #333; border-bottom: 1px solid #262626; position: relative; }
.cg { display: flex; flex-direction: column; gap: 6px; flex: none; }
.r { height: 20px; display: flex; align-items: center; }
.refgrid { margin: 2px 0 0 0; width: 25px; height: 25px; }
.g-xy { margin-left: 10px; width: 100px; }
.g-bh { margin-left: 15px; width: 98px; }
.r label { width: 15px; font-size: 11px; color: #e2e2e2; }
.g-bh label { width: 13px; }
.fld { height: 20px; display: flex; border: 1px solid #454545; border-radius: 3px; background: #2d2d2d; align-items: stretch; overflow: hidden; flex: none; }
.f85 { width: 85px; }
.f87 { width: 87px; }
.f86 { width: 86px; }
.f68 { width: 68px; }
.f180 { width: 180px; }
.spin { width: 16px; flex: none; display: flex; flex-direction: column; align-items: center; justify-content: center; gap: 3px; border-right: 1px solid #454545; background: #333; }
.spin svg { width: 8px; height: 5px; }
.val { flex: 1; padding-left: 4px; font-size: 10.500px; line-height: 18px; color: #d8d8d8; white-space: nowrap; overflow: hidden; letter-spacing: -.2px; }
.dd { width: 18px; flex: none; display: flex; align-items: center; justify-content: center; border-left: 1px solid #454545; background: #333; }
.dd svg { width: 9px; height: 6px; }
.f68 .dd svg { width: 6px; height: 10px; }
.brokenlink { margin: 10px 0 0 11px; }
.g-scale { margin-left: 18px; width: 105px; }
.ci15 { width: 15px; height: 15px; margin-right: 5px; }
.chainbtn { margin: 11px 0 0 7px; width: 22px; height: 22px; background: #222; border-radius: 3px; display: flex; align-items: center; justify-content: center; }
.g-angle { margin-left: 10px; width: 104px; }
.ci11 { width: 11px; height: 11px; margin-right: 6px; }
.g-rot { margin-left: 15px; width: 44px; }
.ic-gap { gap: 8px; }
.pbox { margin: 1px 0 0 11px; width: 25px; height: 25px; position: relative; text-align: center; }
.pbox { background:
  linear-gradient(#ddd,#ddd) 0 0/4px 1px no-repeat, linear-gradient(#ddd,#ddd) 0 0/1px 4px no-repeat,
  linear-gradient(#ddd,#ddd) 100% 0/4px 1px no-repeat, linear-gradient(#ddd,#ddd) 100% 0/1px 4px no-repeat,
  linear-gradient(#ddd,#ddd) 0 100%/4px 1px no-repeat, linear-gradient(#ddd,#ddd) 0 100%/1px 4px no-repeat,
  linear-gradient(#ddd,#ddd) 100% 100%/4px 1px no-repeat, linear-gradient(#ddd,#ddd) 100% 100%/1px 4px no-repeat; }
.pglyph { font: 20px/25px "Liberation Serif", serif; color: #e4e4e4; }
.g-tree { margin-left: 18px; width: 44px; }
.ic-gap2 { gap: 12px; }
.lr { width: 18px; height: 12px; }
.g-sw { margin-left: 14px; width: 39px; }
.swatch { margin-right: 5px; }
.arrowbtn { width: 15px; height: 20px; border: 1px solid #454545; border-radius: 3px; display: flex; align-items: center; justify-content: center; }
.arrowbtn svg { width: 6px; height: 10px; }
.g-stroke { margin-left: 12px; width: 86px; }
.whitebox { width: 68px; flex: none; background: #e2e2e2; display: flex; align-items: center; padding: 0 3px; }
.blackline { width: 62px; height: 10px; background: #000; }
.wb2 { padding: 0; }
.g-fx { margin-left: 15px; width: 87px; }
.fxrow { gap: 13px; padding-left: 2px; }
.fxtxt { font: italic 16px "Liberation Serif", serif; color: #a0a0a0; margin-left: 3px; }
.oprow { gap: 8px; }
.oprow .val { padding-left: 3px; }
.f68 .dd { width: 17px; }
.g-wrap { margin-left: 13px; width: 48px; }
.g-wrap .r { gap: 8px; }
.wrapon { width: 22px; height: 22px; background: #222; display: flex; align-items: center; justify-content: center; border-radius: 2px; }
.wrapoff { width: 22px; height: 22px; display: flex; align-items: center; justify-content: center; }
.g-corner { margin-left: 15px; width: 106px; align-items: flex-end; }
.cornerblue { margin-right: 4px; }
.g-fit { margin-left: 15px; width: 132px; }
.fitrow { gap: 9px; }
.m10 { margin-left: 10px; }
.autofit { gap: 6px; font-size: 10px; color: #9c9c9c; margin-left: -3px; letter-spacing: -.15px; white-space: nowrap; }
.cb { width: 12px; height: 14px; border: 1px solid #777; border-radius: 2px; }
.g-align { margin-left: 20px; width: 101px; }
.alrow { gap: 12px; }
.alrow2 { margin-left: -1px; }
.framedot { margin: 10px 0 0 25px; }
.g-style { margin-left: 12px; width: 180px; }
.stylebox { flex: 1; background: #e6e6e6; color: #202020; padding-left: 7px; font-size: 10.500px; line-height: 18px; }
.stylerow { justify-content: flex-end; gap: 10px; padding-right: 3px; }
.bolt { margin: 13px 0 0 211px; }
.g-last { margin: 5px 0 0 17px; gap: 18px; align-items: center; }

/* main */
.main { height: 988px; flex: none; display: flex; }
.strip { height: 14px; background: #262626; position: relative; }
.collapse { position: absolute; left: 6px; top: -1px; font-size: 11px; letter-spacing: -1px; color: #888; line-height: 14px; }
.left { width: 72px; flex: none; display: flex; flex-direction: column; background: #262626; }
.toolbar { flex: 1; background: #333; border-right: 1px solid #252525; }
.grip { height: 14px; }
.tools { display: grid; grid-template-columns: 30px 30px; padding-left: 6px; }
.t-a { grid-auto-rows: 23px; }
.t-b { grid-auto-rows: 24.750px; margin-top: 4px; }
.t-c { grid-auto-rows: 24px; margin-top: 3px; }
.tool { position: relative; display: flex; align-items: center; justify-content: center; }
.tool.on { background: #262626; border-radius: 2px; }
.tool .c { position: absolute; right: 2px; bottom: 1px; width: 3px; height: 3px; background: linear-gradient(135deg, transparent 50%, #ccc 50%); }
.grad { width: 16px; height: 14px; display: block; }
.g1 { background: linear-gradient(90deg, #333, #ccc); }
.g2 { background: linear-gradient(#999, #555); }
.colorbox { position: relative; height: 52px; margin-top: 6px; }
.fillsw { position: absolute; left: 10px; top: 0; }
.strokesw { position: absolute; left: 29px; top: 18px; width: 33px; height: 34px; background: #858694; display: flex; align-items: center; justify-content: center; }
.strokesw i { width: 15px; height: 15px; background: #2e2e38; }
.swap { position: absolute; left: 53px; top: 1px; }
.dflt { position: absolute; left: 10px; top: 40px; }
.moderow { display: flex; align-items: center; height: 18px; margin-top: 10px; padding-left: 15px; gap: 14px; }
.modeon { width: 18px; height: 16px; display: flex; align-items: center; justify-content: center; background: #252525; border-radius: 2px; }
.modeon i { width: 8px; height: 8px; border: 1px solid #c0c0c0; }
.tee { font: 700 12px "Liberation Serif", serif; color: #606060; margin-left: -3px; }
.applyrow { display: flex; align-items: center; height: 18px; margin-top: 5px; padding-left: 7px; gap: 7px; }
.applyon { width: 18px; height: 18px; display: flex; align-items: center; justify-content: center; background: #252525; border-radius: 2px; }
.applyon i { width: 12px; height: 12px; background: #8c8c8c; }
.ag { width: 12px; height: 12px; background: linear-gradient(90deg, #444, #ddd, #eee); display: block; }
.viewrow { display: flex; align-items: center; height: 20px; margin-top: 9px; padding-left: 7px; gap: 11px; }
.viewon { width: 28px; height: 20px; display: flex; align-items: center; justify-content: center; background: #252525; border-radius: 2px; }

/* center */
.center { flex: 1; min-width: 0; display: flex; flex-direction: column; background: #262626; }
.tabs { height: 29px; flex: none; display: flex; align-items: stretch; background: #262626; padding-top: 1px; font-size: 11.500px; white-space: nowrap; }
.tab { width: 240px; padding-left: 16px; display: flex; align-items: center; color: #7e7e7e; letter-spacing: -.22px; }
.tab b { margin-left: 9px; font-size: 14px; font-weight: 700; color: #777; }
.tab.active { width: 262px; padding-left: 14px; background: #333; color: #d8d8d8; }
.tab.active b { margin-left: 9px; color: #ccc; }
.hrow { height: 17px; flex: none; display: flex; }
.corner { width: 18px; padding-left: 2px; }
.corner i { height: 17px; background: #1d1d1d; border-right: 1px solid #555; }
.hruler { width: 1630px; display: flex; padding-left: 36px; background: #1c1c1c; overflow: hidden; }
.hruler span { width: 141.600px; flex: none; border-left: 1px solid #777; padding-left: 1px; font-family: "Roboto", sans-serif; font-size: 10.500px; letter-spacing: -.5px; line-height: 15px; color: #dcdcdc;
  background: repeating-linear-gradient(90deg, transparent 0 13.160px, #666 13.160px 14.160px) 0 100%/100% 3px no-repeat; }
.vs-top { width: 18px; background: #2a2a2a; display: flex; justify-content: center; padding-top: 6px; }
.work { height: 927px; flex: none; display: flex; }
.vruler { width: 18px; margin-left: 0; border-left: 2px solid #262626; background: #1c1c1c; border-right: 1px solid #555; padding-top: 108px; overflow: hidden; flex: none; }
.vruler span { display: block; height: 141.600px; border-top: 1px solid #777; padding: 1px 0 0 3px; font-family: "Roboto", sans-serif; font-size: 10px; line-height: 9px; color: #e4e4e4;
  background: repeating-linear-gradient(180deg, transparent 0 13.160px, #666 13.160px 14.160px) 100% 0/4px 100% no-repeat; }
.canvas { width: 1630px; flex: none; background: #080808; position: relative; overflow: hidden; }
.art { position: absolute; left: 0; top: 0; }
.vscroll { width: 18px; flex: none; background: #2a2a2a; position: relative; border-right: 2px solid #222; }
.thumb { position: absolute; left: 2px; top: 155px; width: 12px; height: 125px; background: #444; border-radius: 6px; }
.vsdn { position: absolute; left: 3px; top: 916px; }
.status { height: 15px; flex: none; display: flex; align-items: center; background: #333; font-size: 10.500px; white-space: nowrap; padding-left: 14px; }
.status .dd { width: 17px; background: transparent; height: 100%; }
.s-prev { margin-left: 12px; }
.pagefld { margin-left: 12px; width: 90px; height: 15px; border: 1px solid #4a4a4a; display: flex; justify-content: space-between; padding-left: 3px; line-height: 13px; background: #2d2d2d; color: #ddd; }
.s-next { margin-left: 14px; }
.s-last { margin-left: 13px; }
.s-globe { margin-left: 17px; }
.profile { margin-left: 16px; width: 97px; color: #a8a8a8; font-size: 10px; }
.s-ch1 { margin-left: 4px; }
.dot { margin-left: 15px; width: 11px; height: 11px; border-radius: 50%; background: #4caf50; }
.noerr { margin-left: 5px; width: 60px; color: #d8d8d8; font-size: 10px; }
.s-ch2 { margin-left: 14px; }
.s-la { margin-left: 17px; }
.hthumb { margin-left: 612px; width: 187px; height: 14px; border-radius: 7px; background: #4a4a4a; }
.s-ra { margin-left: 342px; }
.s-split { margin-left: 7px; }
.s-grip { margin-left: 10px; width: 6px; height: 10px; background: radial-gradient(#666 40%, transparent 45%) 0 0/2px 2px; }

/* right panel */
.panel { width: 182px; flex: none; background: #353535; display: flex; flex-direction: column; }
.pstrip { background: #262626; }
.pstrip .collapse { left: auto; right: 6px; }
.pgroup { border-bottom: 1px solid #232323; padding-bottom: 2px; }
.pgrip { height: 10px; background: repeating-linear-gradient(90deg, #4c4c4c 0 1px, transparent 1px 3px) 50% 3px/21px 4px no-repeat; }
.pgroup.first { padding-top: 0; margin-top: 0; border-top: 1px solid #232323; }
.pgroup.first .pgrip { height: 8px; }
.pi { height: 28px; display: flex; align-items: center; padding-left: 10px; font-size: 10.800px; font-weight: 600; color: #dadada; white-space: nowrap; }
.pi span { margin-top: -2px; }
.pi svg { width: 20px; height: 20px; margin-right: 6px; }
.pi svg.ccl { width: 22px; height: 16px; margin: 0 5px 0 -1px; }
.pi .fxbig { width: 20px; margin: 0 6px 0 0; font: italic 18px "Liberation Serif", serif; color: #9c9c9c; text-align: center; }

/* dialog */
.dialog { position: absolute; left: 751px; top: 427px; width: 418px; height: 217px; background: #323232; border: 1px solid #4d8794; box-shadow: 0 0 6px rgba(0,0,0,.5); }
.dtitle { height: 37px; background: #fff; color: #2a2a2a; font-size: 14px; line-height: 37px; padding-left: 9px; }
.dbody { padding: 17px 15px 0 16px; }
.dhead { font-size: 12px; line-height: 17px; color: #e0e0e0; }
.corners { display: flex; margin: 22px 0 0 16px; height: 52px; }
.ccol { display: flex; flex-direction: column; gap: 11px; width: 145px; }
.crow { height: 20px; display: flex; align-items: center; }
.cmark { margin-right: 5px; }
.dfld { width: 72px; height: 21px; display: flex; border: 1px solid #454545; border-radius: 3px; overflow: hidden; flex: none; }
.dspin { width: 17px; }
.dval { flex: 1; font-size: 12.500px; line-height: 19px; padding-left: 4px; color: #eee; overflow: hidden; white-space: nowrap; background: #2d2d2d; }
.dval.focus { background: #fff; color: #222; box-shadow: inset 0 0 0 1px #8ec4f0; font-size: 12px; padding-left: 3px; letter-spacing: -.1px; }
.caret { display: inline-block; width: 1px; height: 13px; background: #000; vertical-align: -2px; }
.dswatch { margin-left: 12px; width: 43px; height: 21px; display: flex; border: 1px solid #454545; border-radius: 3px; overflow: hidden; flex: none; }
.ds { width: 25px; flex: none; background: #e2e2e2; }
.dswatch .dd { flex: 1; width: auto; }
.dchain { margin: 14px 0 0 17px; width: 18px; height: 19px; background: #222; border-radius: 3px; display: flex; align-items: center; justify-content: center; flex: none; }
.cright { margin-left: 20px; }
.cright .cmark { margin-right: 2px; }
.cright .dswatch { margin-left: 12px; }
.dfoot { display: flex; align-items: center; margin-top: 29px; }
.preview { width: 185px; display: flex; align-items: center; gap: 7px; font-size: 11.500px; color: #b8b8b8; margin-top: -6px; }
.pcb { width: 12px; height: 12px; background: #9a9a9a; border-radius: 2px; }
.btn { width: 90px; height: 26px; border: 1px solid #cfcfcf; border-radius: 13px; color: #d8d8d8; display: flex; align-items: center; justify-content: center; font-size: 12px; }
.btn.ok { border-width: 2px; margin-right: 10px; }
.tooltip { position: absolute; left: 95px; top: 149px; width: 77px; height: 25px; background: #fff; color: #7c7c7c; font-size: 13.500px; line-height: 25px; text-align: center; box-shadow: 1px 1px 3px rgba(0,0,0,.6); }
.ibeam { position: absolute; left: 84px; top: 131px; }
```
